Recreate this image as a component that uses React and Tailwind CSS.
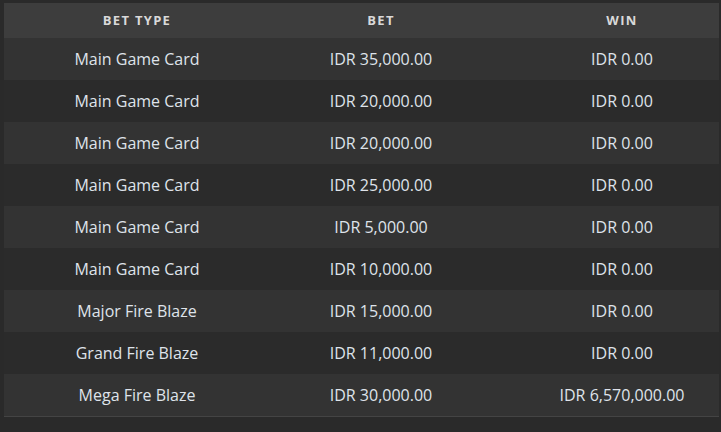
import React from "react";

const rows = [
  ["Main Game Card", "IDR 35,000.00", "IDR 0.00"],
  ["Main Game Card", "IDR 20,000.00", "IDR 0.00"],
  ["Main Game Card", "IDR 20,000.00", "IDR 0.00"],
  ["Main Game Card", "IDR 25,000.00", "IDR 0.00"],
  ["Main Game Card", "IDR 5,000.00", "IDR 0.00"],
  ["Main Game Card", "IDR 10,000.00", "IDR 0.00"],
  ["Major Fire Blaze", "IDR 15,000.00", "IDR 0.00"],
  ["Grand Fire Blaze", "IDR 11,000.00", "IDR 0.00"],
  ["Mega Fire Blaze", "IDR 30,000.00", "IDR 6,570,000.00"],
];

export default function App() {
  return (
    <div className="w-[721px] h-[432px] bg-[#2a2a2a] overflow-hidden pt-[3px] pl-[4px] pr-[2px] font-['Open_Sans',sans-serif]">
      <div className="grid grid-cols-[266px_222px_1fr] h-[35px] items-center bg-[#3d3d3d] text-[13px] font-bold tracking-[0.1em] text-[#d9d9d9]">
        <div className="text-center">BET TYPE</div>
        <div className="text-center">BET</div>
        <div className="text-center pl-[33px]">WIN</div>
      </div>
      <div className="border-b border-[#444444]">
        {rows.map((r, i) => (
          <div
            key={i}
            className={`grid grid-cols-[266px_222px_1fr] h-[42px] items-center text-[16px] text-[#dfe3ea] ${
              i % 2 === 0 ? "bg-[#333333]" : "bg-[#2b2b2b]"
            }`}
          >
            <div className="text-center">{r[0]}</div>
            <div className="text-center">{r[1]}</div>
            <div className="text-center pl-[33px]">{r[2]}</div>
          </div>
        ))}
      </div>
    </div>
  );
}
